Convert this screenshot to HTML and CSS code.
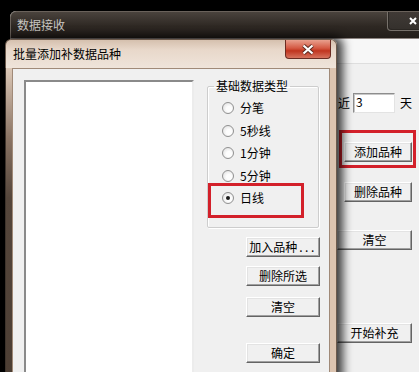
FILE: index.html
```html
<!DOCTYPE html>
<html lang="zh-CN">
<head>
    <meta charset="UTF-8">
    <title>数据接收</title>
    <link rel="stylesheet" href="styles.css">
</head>
<body>
<div class="win">
    <div class="win-title">
        <span>数据接收</span>
        <a class="win-close"><svg width="8" height="8" viewBox="0 0 8 8"><path d="M1 1L7 7M7 1L1 7" stroke="#fff" stroke-width="2"/></svg></a>
    </div>
    <div class="win-client">
        <div class="toolbar"></div>
        <div class="side">
            <div class="days"><span>近</span><input class="edit" value="3"><span class="tian">天</span></div>
            <a class="btn w68 b1">添加品种</a>
            <a class="btn w68 b2">删除品种</a>
            <a class="btn w75 b3">清空</a>
            <a class="btn w75 b4">开始补充</a>
        </div>
    </div>
    <div class="mark mark-add"></div>
</div>

<div class="dlg">
    <div class="dlg-title">
        <span>批量添加补数据品种</span>
        <a class="dlg-close"><svg width="14" height="11" viewBox="0 0 14 11"><path d="M2.5 1.5L11.5 9.5M11.5 1.5L2.5 9.5" stroke="#5a2a20" stroke-width="4"/><path d="M2.5 1.5L11.5 9.5M11.5 1.5L2.5 9.5" stroke="#fff" stroke-width="2.2"/></svg></a>
    </div>
    <div class="dlg-frame">
        <div class="dlg-client">
            <div class="list"></div>
            <div class="col">
                <fieldset class="group">
                    <legend>基础数据类型</legend>
                    <label class="radio"><i></i>分笔</label>
                    <label class="radio"><i></i>5秒线</label>
                    <label class="radio"><i></i>1分钟</label>
                    <label class="radio"><i></i>5分钟</label>
                    <label class="radio on"><i></i>日线</label>
                </fieldset>
                <a class="btn w74 c1">加入品种<span class="dots">...</span></a>
                <a class="btn w74 c2">删除所选</a>
                <a class="btn w74 c3">清空</a>
                <a class="btn w74 c4">确定</a>
            </div>
            <div class="mark mark-day"></div>
        </div>
    </div>
</div>
</body>
</html>
```

FILE: styles.css
```css
* {
    margin: 0;
    padding: 0;
    box-sizing: border-box;
}
body {
    position: relative;
    width: 419px;
    height: 372px;
    overflow: hidden;
    background: #000;
    font-family: "Noto Sans CJK SC", "Noto Sans", sans-serif;
    font-size: 12px;
    line-height: 14px;
    color: #000;
}

/* back window */
.win {
    position: absolute;
    left: 10px;
    top: 11px;
    width: 420px;
    height: 370px;
    display: flex;
    flex-direction: column;
    border-radius: 6px 6px 0 0;
    background: #f0f0f0;
}
.win-title {
    height: 27px;
    display: flex;
    align-items: center;
    padding-left: 6px;
    color: #c9c6c2;
    border: 1px solid #6a625b;
    border-bottom: 0;
    border-radius: 6px 6px 0 0;
    background: linear-gradient(#4a433d, #2e2823 55%, #231e1a);
}
.win-close {
    align-self: flex-start;
    margin-left: auto;
    margin-right: 6px;
    width: 36px;
    height: 19px;
    padding: 5px 0 0 21px;
    border: 1px solid #77716b;
    border-top: 0;
    border-radius: 0 0 0 4px;
    background: linear-gradient(#403a36, #34302c);
    box-shadow: inset 1px -1px #2a2622;
}
.win-close svg {
    display: block;
}
.win-client {
    flex: 1;
    display: flex;
    flex-direction: column;
}
.toolbar {
    height: 26px;
    background: #f7f7f7;
    border-top: 1px solid #8c8480;
    border-bottom: 1px solid #dedede;
}
.side {
    align-self: flex-end;
    width: 75px;
    margin-right: 18px;
    padding-top: 29px;
    display: flex;
    flex-direction: column;
    align-items: flex-end;
}
.days {
    display: flex;
    align-items: center;
    height: 20px;
    width: 75px;
    padding-left: 1px;
}
.edit {
    width: 42px;
    height: 20px;
    margin-left: 3px;
    padding: 0 2px 4px;
    font: inherit;
    border: 1px solid #a0a0a0;
    border-color: #8d8d8d #e3e3e3 #e3e3e3 #8d8d8d;
    box-shadow: inset 1px 1px #c8c8c8;
    background: #fff;
    outline: none;
}
.tian {
    margin-left: 5px;
}

/* buttons */
.btn {
    display: flex;
    align-items: center;
    justify-content: center;
    height: 20px;
    background: #f0f0f0;
    border: 1px solid;
    border-color: #fff #646464 #646464 #fff;
    box-shadow: inset -1px -1px #a0a0a0, inset 1px 1px #e3e3e3;
    cursor: default;
}
.w68 { width: 68px; }
.w74 { width: 74px; }
.w75 { width: 75px; }
.b1 { margin-top: 29px; }
.b2 { margin-top: 20px; }
.b3 { margin-top: 28px; }
.b4 { margin-top: 73px; }
.dots {
    letter-spacing: 2.5px;
    margin-left: 2px;
}

/* red marks */
.mark {
    position: absolute;
    border: 3px solid #d3202a;
}
.mark-add {
    left: 329px;
    top: 119px;
    width: 77px;
    height: 38px;
}
.mark-day {
    left: 195px;
    top: 114px;
    width: 96px;
    height: 35px;
}

/* front dialog */
.dlg {
    position: absolute;
    left: 5px;
    top: 39px;
    width: 332px;
    height: 345px;
    display: flex;
    flex-direction: column;
    border-radius: 6px 6px 0 0;
    box-shadow: 3px 0 10px 3px rgba(0, 0, 0, 0.75);
}
.dlg-title {
    height: 29px;
    display: flex;
    align-items: center;
    padding-left: 7px;
    border: 1px solid #6c5a4c;
    border-bottom: 0;
    border-radius: 6px 6px 0 0;
    background: linear-gradient(#d5c0ae, #e8d8ca 35%, #efe4da);
}
.dlg-close {
    align-self: flex-start;
    margin-left: auto;
    margin-right: 5px;
    width: 46px;
    height: 19px;
    display: flex;
    align-items: center;
    justify-content: center;
    border: 1px solid #6a2c22;
    border-top: 0;
    border-radius: 0 0 4px 4px;
    background: linear-gradient(#e9a08e, #d45a44 45%, #c0351f 60%, #d6735e);
}
.dlg-close svg {
    display: block;
}
.dlg-frame {
    flex: 1;
    display: flex;
    padding: 0 6px;
    background: linear-gradient(#dcc8b7, #8a7464 70px, #55463b 130px, #4c3e34) left top / 6px 100% no-repeat, #dcc4b0;
    border-left: 1px solid #3e342c;
    border-right: 1px solid #6c5a4c;
}
.dlg-client {
    position: relative;
    flex: 1;
    display: flex;
    padding: 11px 0 0 11px;
    background: #f0f0f0;
    border: 1px solid #a08a78;
    border-bottom: 0;
}
.list {
    width: 170px;
    background: #fff;
    border: 2px solid;
    border-color: #8a8a8a #ececec #ececec #8a8a8a;
    border-bottom: 0;
}
.col {
    width: 113px;
    margin-left: 13px;
    display: flex;
    flex-direction: column;
    align-items: flex-end;
}
.group {
    align-self: flex-start;
    width: 112px;
    margin-top: -1px;
    padding: 4px 0 17px 14px;
    border: 1px solid #cdcdcd;
    border-radius: 2px;
    box-shadow: 1px 1px #fff, inset 1px 1px #fff;
}
.group legend {
    margin-left: -8px;
    padding: 0 2px;
    line-height: 14px;
}
.radio {
    display: flex;
    align-items: center;
    height: 22.5px;
}
.radio i {
    position: relative;
    width: 12px;
    height: 12px;
    margin-right: 6px;
    border-radius: 50%;
    border: 1px solid #909090;
    background: radial-gradient(circle at 60% 60%, #fdfdfd 30%, #dadada 100%);
}
.radio.on i::after {
    content: "";
    position: absolute;
    left: 3px;
    top: 3px;
    width: 4px;
    height: 4px;
    border-radius: 50%;
    background: #1a1a1a;
}
.c1 { margin-top: 9px; }
.c2 { margin-top: 9px; }
.c3 { margin-top: 11px; }
.c4 { margin-top: 26px; }
```
